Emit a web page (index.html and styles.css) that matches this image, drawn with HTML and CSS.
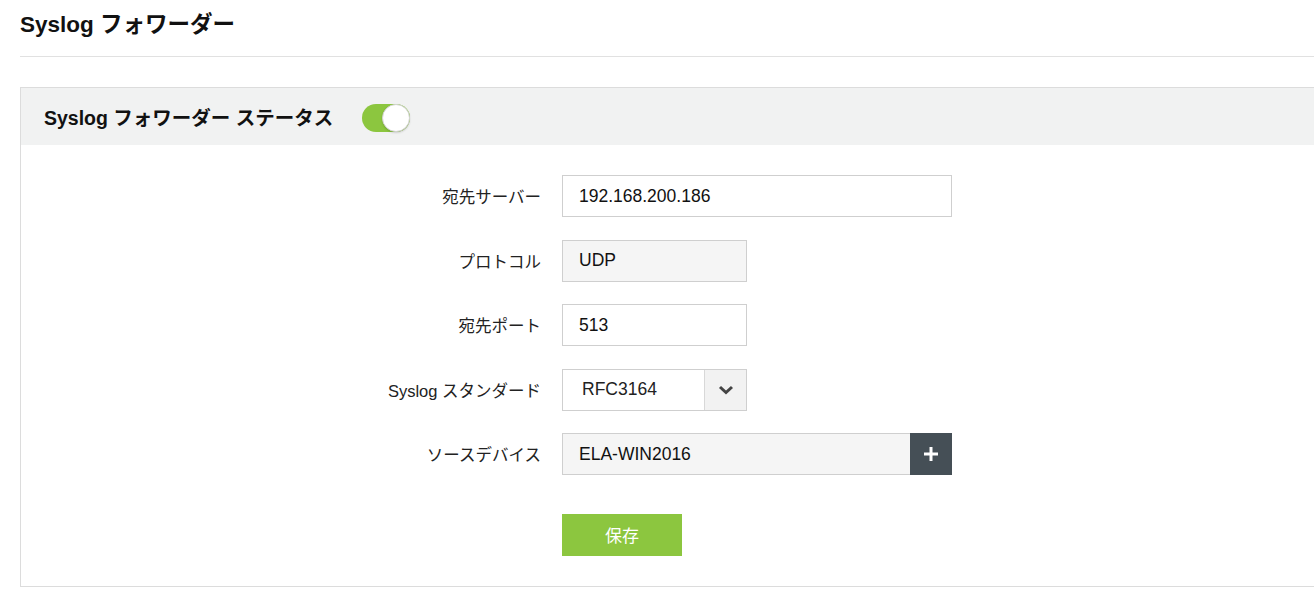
FILE: index.html
```html
<!DOCTYPE html>
<html lang="ja">
<head>
    <meta charset="UTF-8">
    <meta name="viewport" content="width=device-width, initial-scale=1.0">
    <title>Syslog フォワーダー</title>
    <link rel="stylesheet" href="styles.css">
</head>
<body>

<div class="page">
    <h1 class="page-title">Syslog フォワーダー</h1>

    <div class="panel">
        <div class="panel-header">
            <span class="panel-title">Syslog フォワーダー ステータス</span>
            <label class="switch">
                <input type="checkbox" checked>
                <span class="slider"></span>
            </label>
        </div>

        <div class="form">
            <label class="form-label" for="servidor">宛先サーバー</label>
            <div class="form-field">
                <input type="text" id="servidor" class="field field-wide" value="192.168.200.186">
            </div>

            <label class="form-label">プロトコル</label>
            <div class="form-field">
                <div class="field field-short field-readonly">UDP</div>
            </div>

            <label class="form-label" for="porta">宛先ポート</label>
            <div class="form-field">
                <input type="text" id="porta" class="field field-short" value="513">
            </div>

            <label class="form-label">Syslog スタンダード</label>
            <div class="form-field">
                <div class="select">
                    <span class="select-value">RFC3164</span>
                    <span class="select-arrow">
                        <svg width="16" height="12" viewBox="0 0 16 12"><path d="M2 3 L8 8.5 L14 3" fill="none" stroke="#444" stroke-width="3"/></svg>
                    </span>
                </div>
            </div>

            <label class="form-label">ソースデバイス</label>
            <div class="form-field">
                <div class="device-group">
                    <div class="field field-readonly device-name">ELA-WIN2016</div>
                    <button class="btn-plus" type="button">
                        <svg width="16" height="16" viewBox="0 0 16 16"><path d="M8 1 V15 M1 8 H15" stroke="#fff" stroke-width="3"/></svg>
                    </button>
                </div>
            </div>

            <span></span>
            <div class="form-field form-actions">
                <button class="btn btn-salvar" type="button">保存</button>
            </div>
        </div>
    </div>
</div>

</body>
</html>
```

FILE: styles.css
```css
html, body {
    overflow: hidden;
}

body {
    font-family: "Liberation Sans", Arial, "Noto Sans CJK JP", sans-serif;
    margin: 0;
    padding: 0;
    background-color: #fff;
    color: #222;
}

.page {
    padding: 0 0 0 20px;
    margin-right: -40px;
}

.page-title {
    font-size: 22.5px;
    font-weight: bold;
    margin: 0;
    height: 56px;
    line-height: 50px;
    border-bottom: 1px solid #e1e1e1;
    color: #111;
}

.panel {
    margin-top: 30px;
    border: 1px solid #dcdcdc;
    background-color: #fff;
}

.panel-header {
    display: flex;
    align-items: center;
    height: 57px;
    padding-left: 23px;
    background-color: #f1f2f2;
}

.panel-title {
    font-size: 19.5px;
    font-weight: bold;
    color: #111;
}

.switch {
    position: relative;
    display: inline-block;
    width: 48px;
    height: 28px;
    margin-left: 29px;
    margin-top: 3px;
}

.switch input {
    display: none;
}

.slider {
    position: absolute;
    inset: 0;
    border-radius: 14px;
    background-color: #8cc63f;
}

.slider::after {
    content: "";
    position: absolute;
    right: 0;
    top: 0;
    width: 26px;
    height: 26px;
    border-radius: 50%;
    background-color: #fff;
    border: 1px solid #d4d4d4;
    box-shadow: 0 1px 2px rgba(0, 0, 0, 0.15);
}

.form {
    display: grid;
    grid-template-columns: 520px 1fr;
    column-gap: 21px;
    row-gap: 22.5px;
    padding: 30px 0 30px 0;
    align-items: center;
}

.form-label {
    text-align: right;
    font-size: 16.5px;
    color: #222;
}

.form-field {
    display: flex;
}

.field {
    height: 42px;
    box-sizing: border-box;
    border: 1px solid #cfcfcf;
    padding: 0 16px;
    font-family: "Liberation Sans", Arial, sans-serif;
    font-size: 17.5px;
    color: #111;
    background-color: #fff;
    display: flex;
    align-items: center;
    outline: none;
}

.field-wide {
    width: 390px;
}

.field-short {
    width: 185px;
}

.field-readonly {
    background-color: #f5f5f5;
}

.select {
    display: flex;
    width: 185px;
    height: 42px;
    box-sizing: border-box;
    border: 1px solid #cfcfcf;
}

.select-value {
    flex: 1;
    display: flex;
    align-items: center;
    padding-left: 19px;
    font-size: 17.5px;
    color: #222;
}

.select-arrow {
    width: 41px;
    display: flex;
    align-items: center;
    justify-content: center;
    background-color: #f2f2f2;
    border-left: 1px solid #d8d8d8;
}

.device-group {
    display: flex;
}

.device-name {
    width: 348px;
    border-right: none;
}

.btn-plus {
    width: 42px;
    height: 42px;
    border: none;
    padding: 0;
    background-color: #454f56;
    display: flex;
    align-items: center;
    justify-content: center;
    cursor: pointer;
}

.form-actions {
    margin-top: 16px;
}

.btn {
    border: none;
    cursor: pointer;
    font-family: "Liberation Sans", "Noto Sans CJK JP", sans-serif;
}

.btn-salvar {
    width: 120px;
    height: 42px;
    background-color: #8cc63f;
    color: #fff;
    font-size: 17px;
}
```
